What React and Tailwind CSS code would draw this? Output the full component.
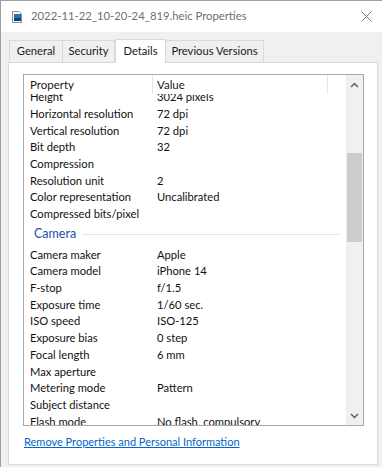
import React from "react";

const rows1 = [
  ["Height", "3024 pixels"],
  ["Horizontal resolution", "72 dpi"],
  ["Vertical resolution", "72 dpi"],
  ["Bit depth", "32"],
  ["Compression", ""],
  ["Resolution unit", "2"],
  ["Color representation", "Uncalibrated"],
  ["Compressed bits/pixel", ""],
];
const rows2 = [
  ["Camera maker", "Apple"],
  ["Camera model", "iPhone 14"],
  ["F-stop", "f/1.5"],
  ["Exposure time", "1/60 sec."],
  ["ISO speed", "ISO-125"],
  ["Exposure bias", "0 step"],
  ["Focal length", "6 mm"],
  ["Max aperture", ""],
  ["Metering mode", "Pattern"],
  ["Subject distance", ""],
  ["Flash mode", "No flash, compulsory"],
];

function Row({ p, v }) {
  return (
    <div className="flex h-[16.7px] items-center text-[11.2px] text-[#111] leading-none">
      <div className="w-[133px] pl-[6px] shrink-0 whitespace-nowrap">{p}</div>
      <div className="whitespace-nowrap">{v}</div>
    </div>
  );
}

export default function App() {
  return (
    <div
      className="w-[382px] h-[467px] bg-[#f0f0f0] border-l border-t border-[#a0a0a0] flex flex-col overflow-hidden"
      style={{ fontFamily: 'Lato, "Liberation Sans", sans-serif' }}
    >
      {/* Title bar */}
      <div className="h-[31px] bg-white flex items-center shrink-0">
        <svg width="14" height="14" viewBox="0 0 14 14" className="ml-[9px] mr-[7px]">
          <path d="M2.5 1.5 H9 L11.5 4 V12.5 H2.5 Z" fill="#fff" stroke="#8a8a8a" />
          <rect x="4" y="4" width="7" height="7" fill="#2a6fb8" />
          <rect x="4" y="8" width="7" height="3" fill="#0f3f7a" />
        </svg>
        <div className="text-[11.3px] text-[#6f6f6f] whitespace-nowrap">
          2022-11-22_10-20-24_819.heic Properties
        </div>
        <div className="flex-1" />
        <svg width="11" height="11" viewBox="0 0 11 11" className="mr-[10px]">
          <path d="M0.5 0.5 L10.5 10.5 M10.5 0.5 L0.5 10.5" stroke="#7a7a7a" strokeWidth="1" />
        </svg>
      </div>

      {/* Tabs */}
      <div className="flex items-end pl-[8px] h-[30px] shrink-0 text-[11.2px] text-[#1a1a1a]">
        <div className="h-[22px] w-[54px] flex items-center justify-center border border-b-0 border-[#d9d9d9] bg-[#f0f0f0]">General</div>
        <div className="h-[22px] w-[52px] flex items-center justify-center border border-l-0 border-b-0 border-[#d9d9d9] bg-[#f0f0f0]">Security</div>
        <div className="h-[24px] w-[51px] flex items-start justify-center pt-[3px] border border-b-0 border-[#d9d9d9] bg-white -mb-px relative z-10">Details</div>
        <div className="h-[22px] w-[98px] flex items-center justify-center border border-l-0 border-b-0 border-[#d9d9d9] bg-[#f0f0f0]">Previous Versions</div>
      </div>

      {/* Panel */}
      <div className="ml-[7px] w-[370px] h-[403px] bg-white border border-[#d9d9d9] flex flex-col">
        <div className="ml-[14px] mt-[11px] w-[341px] h-[352px] border border-[#a8a8a8] flex">
          <div className="flex-1 flex flex-col overflow-hidden">
            {/* header */}
            <div className="h-[19px] flex items-center text-[11.5px] text-[#1a1a1a] shrink-0 bg-white relative z-10">
              <div className="w-[129px] pl-[6px] h-full flex items-center border-r border-[#e5e5e5]">Property</div>
              <div className="w-[175px] pl-[4px] h-full flex items-center border-r border-[#e5e5e5]">Value</div>
            </div>
            <div className="flex-1 overflow-hidden">
              <div className="-mt-[5.5px]">
                {rows1.map(([p, v]) => (
                  <Row key={p} p={p} v={v} />
                ))}
                <div className="h-[24px] flex items-center pl-[10px] pr-[7px]">
                  <span className="text-[12.5px] text-[#1e4fa8] mr-[6px]">Camera</span>
                  <div className="flex-1 h-px bg-[#dbe7f5]" />
                </div>
                {rows2.map(([p, v]) => (
                  <Row key={p} p={p} v={v} />
                ))}
              </div>
            </div>
          </div>
          {/* scrollbar */}
          <div className="w-[17px] bg-[#f0f0f0] flex flex-col items-center shrink-0">
            <div className="h-[19px] w-full flex items-center justify-center">
              <svg width="9" height="6" viewBox="0 0 9 6">
                <path d="M1 5 L4.5 1.5 L8 5" fill="none" stroke="#606060" strokeWidth="1.5" />
              </svg>
            </div>
            <div className="mt-[59px] w-[15px] h-[89px] bg-[#cdcdcd]" />
            <div className="flex-1" />
            <div className="h-[19px] w-full flex items-center justify-center">
              <svg width="9" height="6" viewBox="0 0 9 6">
                <path d="M1 1 L4.5 4.5 L8 1" fill="none" stroke="#606060" strokeWidth="1.5" />
              </svg>
            </div>
          </div>
        </div>
        <div className="ml-[15px] mt-[10px] text-[11px] text-[#0066cc] underline leading-none">
          Remove Properties and Personal Information
        </div>
      </div>
    </div>
  );
}
